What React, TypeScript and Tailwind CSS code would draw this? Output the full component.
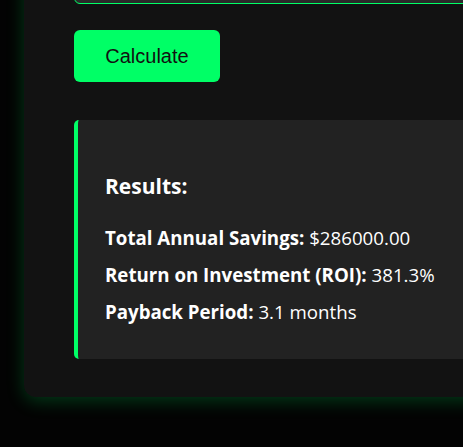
import React from 'react';

const results = [
  { label: 'Total Annual Savings:', value: '$286000.00' },
  { label: 'Return on Investment (ROI):', value: '381.3%' },
  { label: 'Payback Period:', value: '3.1 months' },
];

const App = () => {
  return (
    <div className="h-[447px] w-[463px] overflow-hidden bg-[#030303]">
      <div className="-mt-[40px] ml-[24px] w-[520px] rounded-[12px] bg-[#121212] px-[50px] pb-[38px] shadow-[0_4px_18px_rgba(0,255,102,0.22)]">
        {/* input field above, mostly scrolled off */}
        <div className="h-[44px] w-full rounded-[6px] border border-[#00ff66] bg-[#2a2a2a]" />
        <button
          type="button"
          className="mt-[26px] flex h-[52px] w-[146px] items-center justify-center rounded-[6px] bg-[#00ff66] text-[20px] text-[#111] font-['Liberation_Sans',Arial,sans-serif]"
        >
          Calculate
        </button>
        <div className="mt-[38px] rounded-l-[5px] border-l-4 border-[#00ff66] bg-[#222222] pl-[27px] pr-5 pt-[52px] pb-[34px] font-['Open_Sans',sans-serif] text-white">
          <h3 className="text-[21px] font-bold leading-[28px]">Results:</h3>
          <div className="mt-[24px] flex flex-col gap-[10px]">
            {results.map((r) => (
              <p key={r.label} className="text-[18.7px] leading-[27px]">
                <strong className="font-bold">{r.label}</strong> {r.value}
              </p>
            ))}
          </div>
        </div>
      </div>
    </div>
  );
};

export default App;
